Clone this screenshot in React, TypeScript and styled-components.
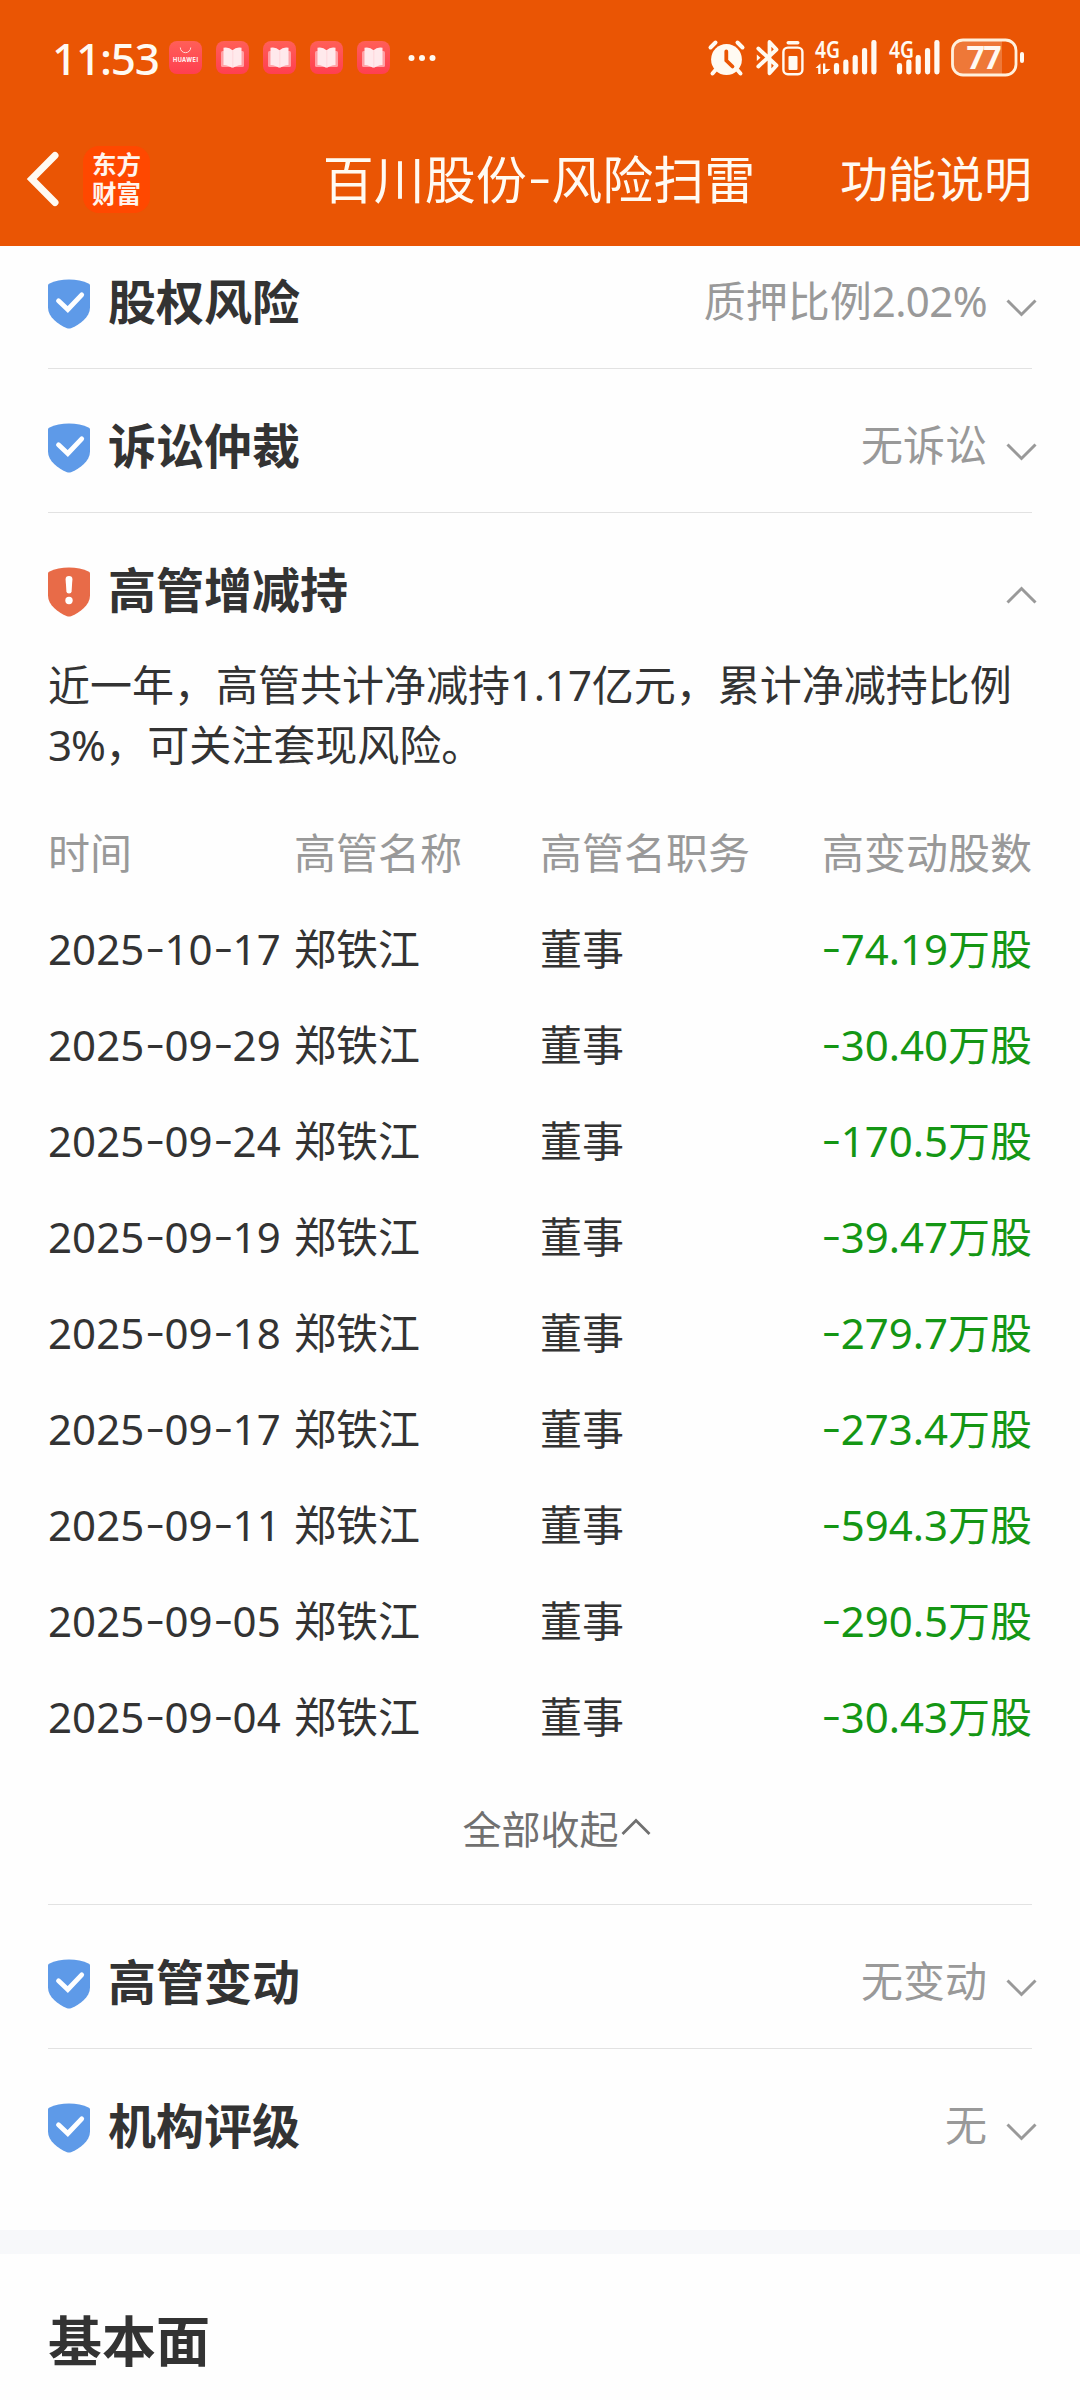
import React from "react";
import styled, { createGlobalStyle } from "styled-components";

const sans = `"Noto Sans", "Noto Sans CJK SC", sans-serif`;

const GlobalStyle = createGlobalStyle`
  * { box-sizing: border-box; }
  body { margin: 0; background: #fefefe; }
`;

const Page = styled.div`
  width: 1080px;
  height: 2400px;
  overflow: hidden;
  display: flex;
  flex-direction: column;
  background: #fefefe;
  color: #333;
  font-family: ${sans};
`;

/* ---------- header ---------- */

const Header = styled.header`
  flex: none;
  height: 246px;
  background: #ea5504;
  color: #fffaf2;
  position: relative;
  z-index: 1;
`;

const StatusBar = styled.div`
  height: 112px;
  padding: 3px 54px 0 52px;
  display: flex;
  align-items: center;
  justify-content: space-between;
`;

const StatusGroup = styled.div`
  display: flex;
  align-items: center;
`;

const Clock = styled.span`
  width: 117px;
  font-size: 44px;
  line-height: 50px;
  font-weight: 500;
  letter-spacing: -1.2px;
  white-space: nowrap;
`;

const AppBadges = styled.div`
  display: flex;
  gap: 14px;
  margin-right: 18px;
`;

const Glyph = styled.svg<{ $ml?: number }>`
  display: block;
  flex: none;
  overflow: visible;
  margin-left: ${(p) => p.$ml ?? 0}px;
`;

const NavBar = styled.div`
  height: 134px;
  padding: 0 48px 0 24px;
  display: grid;
  grid-template-columns: 59px 220px 1fr 257px;
  align-items: center;
`;

const Logo = styled.div`
  width: 67px;
  height: 67px;
  border-radius: 16px;
  background: #ff4800;
  color: #fff5ee;
  font-size: 24.5px;
  line-height: 29px;
  font-weight: 700;
  display: grid;
  place-content: center;
  text-align: center;
`;

const Title = styled.h1`
  margin: 0;
  font-size: 51px;
  line-height: 60px;
  font-weight: 400;
  white-space: nowrap;
  text-align: center;
`;

const NavAction = styled.span`
  font-size: 48px;
  line-height: 60px;
  text-align: right;
`;

/* ---------- numeric text ---------- */

const Run = styled.span<{ $spacing: number }>`
  letter-spacing: ${(p) => p.$spacing}px;
  white-space: nowrap;
`;

const Dash = styled.span`
  font-family: Inter, sans-serif;
  font-size: 1.12em;
  font-weight: 300;
  line-height: 0;
  letter-spacing: -1.4px;
`;

function Num({ value, spacing = 0 }: { value: string; spacing?: number }) {
  return (
    <Run $spacing={spacing}>
      {value.split(/(-)/).map((part, i) => (part === "-" ? <Dash key={i}>-</Dash> : part))}
    </Run>
  );
}

/* ---------- list ---------- */

const List = styled.main`
  flex: none;
  margin-top: -21px;
  padding: 0 48px 38px;
`;

const Item = styled.section<{ $last?: boolean }>`
  border-bottom: ${(p) => (p.$last ? 0 : 1)}px solid #e2e2e2;
`;

const ItemHead = styled.div`
  height: 143px;
  padding-top: 11px;
  display: flex;
  align-items: center;
`;

const Shield = styled.svg`
  display: block;
  flex: none;
  margin: 3px 18px 0 0;
`;

const ItemTitle = styled.h2`
  margin: 0;
  flex: 1;
  font-size: 48px;
  line-height: 60px;
  font-weight: 700;
`;

const ItemStatus = styled.span`
  font-size: 42px;
  line-height: 60px;
  margin: -3px 19px 0 0;
  color: #999;
`;

const ArrowBox = styled.svg<{ $up?: boolean }>`
  display: block;
  flex: none;
  margin: ${(p) => (p.$up ? 9 : 12)}px -5px 0 0;
`;

const Detail = styled.div`
  margin-top: -1px;
  font-size: 42px;
`;

const Summary = styled.p`
  margin: 0 0 30px;
  line-height: 60px;
`;

const Grid = styled.div<{ $head?: boolean }>`
  height: 96px;
  display: grid;
  grid-template-columns: repeat(4, 246px);
  align-items: center;
  line-height: 60px;
  color: ${(p) => (p.$head ? "#999" : "#333")};
`;

const Cell = styled.span<{ $end?: boolean; $down?: boolean }>`
  white-space: nowrap;
  text-align: ${(p) => (p.$end ? "right" : "left")};
  ${(p) => p.$down && "color: #149614;"}
`;

const Collapse = styled.div`
  height: 139px;
  padding: 35px 0 0 33px;
  display: flex;
  justify-content: center;
  align-items: flex-start;
  font-size: 39px;
  line-height: 58px;
  color: #707070;
`;

const CollapseArrow = styled.svg`
  display: block;
  margin: 17px 0 0 2px;
`;

const Band = styled.div`
  flex: none;
  height: 24px;
  background: #f7f8fa;
`;

const NextTitle = styled.h2`
  margin: 0;
  padding: 52px 48px 0;
  font-size: 54px;
  line-height: 70px;
  font-weight: 700;
`;

/* ---------- drawings ---------- */

function StoreBadge() {
  return (
    <Glyph width="33" height="33" viewBox="0 0 33 33">
      <defs>
        <linearGradient id="pink" x1="0" y1="0" x2="0" y2="1">
          <stop offset="0" stopColor="#ff5f58" />
          <stop offset="1" stopColor="#ff3f50" />
        </linearGradient>
      </defs>
      <rect width="33" height="33" rx="8" fill="url(#pink)" />
      <path d="M11.3 6.5a5.2 5.2 0 0 0 10.4 0" fill="none" stroke="#ffd9d4" strokeWidth="1" />
      <text x="16.5" y="21" fill="#fff" fontSize="5.6" fontWeight="700" fontFamily="Inter, sans-serif" textAnchor="middle" textLength="25">
        HUAWEI
      </text>
    </Glyph>
  );
}

function BookBadge() {
  return (
    <Glyph width="33" height="33" viewBox="0 0 33 33">
      <rect width="33" height="33" rx="8" fill="url(#pink)" />
      <rect x="5" y="10" width="23" height="16" rx="1.5" fill="#ffa0a6" />
      <path d="M7.5 6.8Q13 5.8 16.5 9.3Q20 5.8 25.5 6.8V24Q20 24.5 17.5 26.6H15.5Q13 24.5 7.5 24Z" fill="#ffe9ec" />
      <path d="M16.8 9.5V26.5" stroke="#ffd2d8" strokeWidth="0.8" />
    </Glyph>
  );
}

function Signal({ data, ml }: { data?: boolean; ml: number }) {
  const base = data ? 21.5 : 10.5;
  const step = 9.35;
  const tops = [24, 20.5, 16, 9, 1];
  const w = data ? 62 : 50;
  return (
    <Glyph width={w} height="37" viewBox={`0 0 ${w} 37`} $ml={ml} fill="#fffaf2">
      <text x="0" y="18.5" fontSize="23.5" fontWeight="600" fontFamily='"Noto Sans", sans-serif' textLength="25" lengthAdjust="spacingAndGlyphs">
        4G
      </text>
      {data && <path d="M.5 29L5.5 24.5V35H3.2V29ZM8 24.5H10.3V30H15.5L10.3 35H8Z" />}
      {tops.map((t, i) => (
        <rect key={i} x={base + i * step - 2.6} y={t} width="5.2" height={35.5 - t} rx="2.4" />
      ))}
    </Glyph>
  );
}

function StatusIcons() {
  return (
    <StatusGroup>
      <Glyph width="37" height="37" viewBox="0 0 37 37" fill="none" stroke="#fffaf2" strokeLinecap="round">
        <circle cx="18.5" cy="20.5" r="15.4" fill="#fffaf2" stroke="none" />
        <path d="M2.5 8.5L7.5 3.5M34.5 8.5L29.5 3.5M7.5 31L4.5 34.5M29.5 31L32.5 34.5" strokeWidth="4" />
        <path d="M18.3 12.5V21.5L24.5 27.5" stroke="#ea5504" strokeWidth="3.8" />
      </Glyph>
      <Glyph width="23" height="37" viewBox="0 0 23 37" $ml={11} fill="none" stroke="#fffaf2" strokeWidth="3.8" strokeLinejoin="round" strokeLinecap="round">
        <path d="M2.3 9.5L20.5 26.5L13.5 34.3V3L20.5 10.5L2.3 27.5" />
        <path d="M.8 15.5V22L4.5 18.7Z" fill="#fffaf2" stroke="none" />
      </Glyph>
      <Glyph width="22" height="37" viewBox="0 0 22 37" $ml={3} fill="#fffaf2">
        <rect x="4.5" y="2" width="13" height="3.6" rx="1.8" />
        <rect x="1.4" y="8.6" width="19" height="26.6" rx="4.5" fill="none" stroke="#fffaf2" strokeWidth="2.4" />
        <rect x="6.5" y="17" width="9" height="14" rx="1" />
      </Glyph>
      <Signal data ml={11} />
      <Signal ml={12} />
      <Glyph width="75" height="39" viewBox="0 0 75 39" $ml={12} fill="#fffaf2">
        <path d="M12 2H51V37H12A10.5 10.5 0 0 1 1.5 26.5V12.5A10.5 10.5 0 0 1 12 2Z" fill="#ee7838" />
        <rect x="1.5" y="2" width="63.5" height="35" rx="10.5" fill="none" stroke="#fff0dc" strokeWidth="2.8" />
        <rect x="69" y="14" width="4" height="11" rx="2" />
        <text x="33" y="31" fontSize="32" fontWeight="700" fontFamily='"Noto Sans", sans-serif' textAnchor="middle" textLength="35">
          77
        </text>
      </Glyph>
    </StatusGroup>
  );
}

function RiskShield({ warn }: { warn?: boolean }) {
  return (
    <Shield width="42" height="50" viewBox="0 0 42 50">
      <path
        d="M0 6.2Q0 5.2 1 4.7Q10 .5 21 .5Q32 .5 41 4.7Q42 5.2 42 6.2V28.5C42 38 32 45.5 23 49.2Q21 50 19 49.2C10 45.5 0 38 0 28.5Z"
        fill={warn ? "#e86b48" : "#5e9ae8"}
      />
      {warn ? (
        <>
          <path d="M17.6 12.2Q17.6 9 21 9T24.4 12.2L23.6 24.5Q23.4 26.5 21 26.5T18.4 24.5Z" fill="#fff" />
          <circle cx="21" cy="33.5" r="3.7" fill="#fff" />
        </>
      ) : (
        <path d="M10.5 21.8L19.8 30.5L33.7 15.8" fill="none" stroke="#fff" strokeWidth="4.8" strokeLinecap="round" strokeLinejoin="miter" />
      )}
    </Shield>
  );
}

function Arrow({ up }: { up?: boolean }) {
  return (
    <ArrowBox $up={up} width="31" height="20" viewBox="0 0 31 20" fill="none" stroke="#999" strokeWidth="3">
      <path d={up ? "M1.5 17.5L15.5 3.5L29.5 17.5" : "M1.5 2.5L15.5 16.5L29.5 2.5"} />
    </ArrowBox>
  );
}

const trades: [string, string][] = [
  ["2025-10-17", "-74.19"],
  ["2025-09-29", "-30.40"],
  ["2025-09-24", "-170.5"],
  ["2025-09-19", "-39.47"],
  ["2025-09-18", "-279.7"],
  ["2025-09-17", "-273.4"],
  ["2025-09-11", "-594.3"],
  ["2025-09-05", "-290.5"],
  ["2025-09-04", "-30.43"],
];

interface RiskProps {
  title: string;
  status?: React.ReactNode;
  open?: boolean;
  last?: boolean;
  children?: React.ReactNode;
}

function Risk({ title, status, open, last, children }: RiskProps) {
  return (
    <Item $last={last}>
      <ItemHead>
        <RiskShield warn={open} />
        <ItemTitle>{title}</ItemTitle>
        {status && <ItemStatus>{status}</ItemStatus>}
        <Arrow up={open} />
      </ItemHead>
      {children}
    </Item>
  );
}

export default function App() {
  return (
    <Page lang="zh-CN">
      <GlobalStyle />
      <Header>
        <StatusBar>
          <StatusGroup>
            <Clock>11:53</Clock>
            <AppBadges>
              <StoreBadge />
              <BookBadge />
              <BookBadge />
              <BookBadge />
              <BookBadge />
            </AppBadges>
            <Glyph width="28" height="8" viewBox="0 0 28 8" fill="#fffaf2">
              <circle cx="3.5" cy="4" r="3" />
              <circle cx="14" cy="4" r="3" />
              <circle cx="24.5" cy="4" r="3" />
            </Glyph>
          </StatusGroup>
          <StatusIcons />
        </StatusBar>
        <NavBar>
          <Glyph width="36" height="58" viewBox="0 0 36 58" fill="none" stroke="#fffaf2" strokeWidth="7" strokeLinecap="round">
            <path d="M31 5.5L7.7 29L31 52.5" />
          </Glyph>
          <Logo>
            <span>东方</span>
            <span>财富</span>
          </Logo>
          <Title>
            百川股份
            <Num value="-" />
            风险扫雷
          </Title>
          <NavAction>功能说明</NavAction>
        </NavBar>
      </Header>

      <List>
        <Risk title="股权风险" status={<>质押比例<Num value="2.02%" spacing={-0.6} /></>} />
        <Risk title="诉讼仲裁" status="无诉讼" />
        <Risk title="高管增减持" open>
          <Detail>
            <Summary>
              近一年，高管共计净减持
              <Num value="1.17" spacing={-0.4} />
              亿元，累计净减持比例
              <Num value="3%" spacing={-0.9} />
              ，可关注套现风险。
            </Summary>
            <Grid $head>
              <Cell>时间</Cell>
              <Cell>高管名称</Cell>
              <Cell>高管名职务</Cell>
              <Cell $end>高变动股数</Cell>
            </Grid>
            {trades.map(([date, amount]) => (
              <Grid key={date}>
                <Cell>
                  <Num value={date} spacing={0.1} />
                </Cell>
                <Cell>郑铁江</Cell>
                <Cell>董事</Cell>
                <Cell $end $down>
                  <Num value={amount} />
                  万股
                </Cell>
              </Grid>
            ))}
            <Collapse>
              全部收起
              <CollapseArrow width="30" height="20" viewBox="0 0 30 20" fill="none" stroke="#707070" strokeWidth="2.8">
                <path d="M1.5 17L15 3.5L28.5 17" />
              </CollapseArrow>
            </Collapse>
          </Detail>
        </Risk>
        <Risk title="高管变动" status="无变动" />
        <Risk title="机构评级" status="无" last />
      </List>
      <Band />
      <NextTitle>基本面</NextTitle>
    </Page>
  );
}
